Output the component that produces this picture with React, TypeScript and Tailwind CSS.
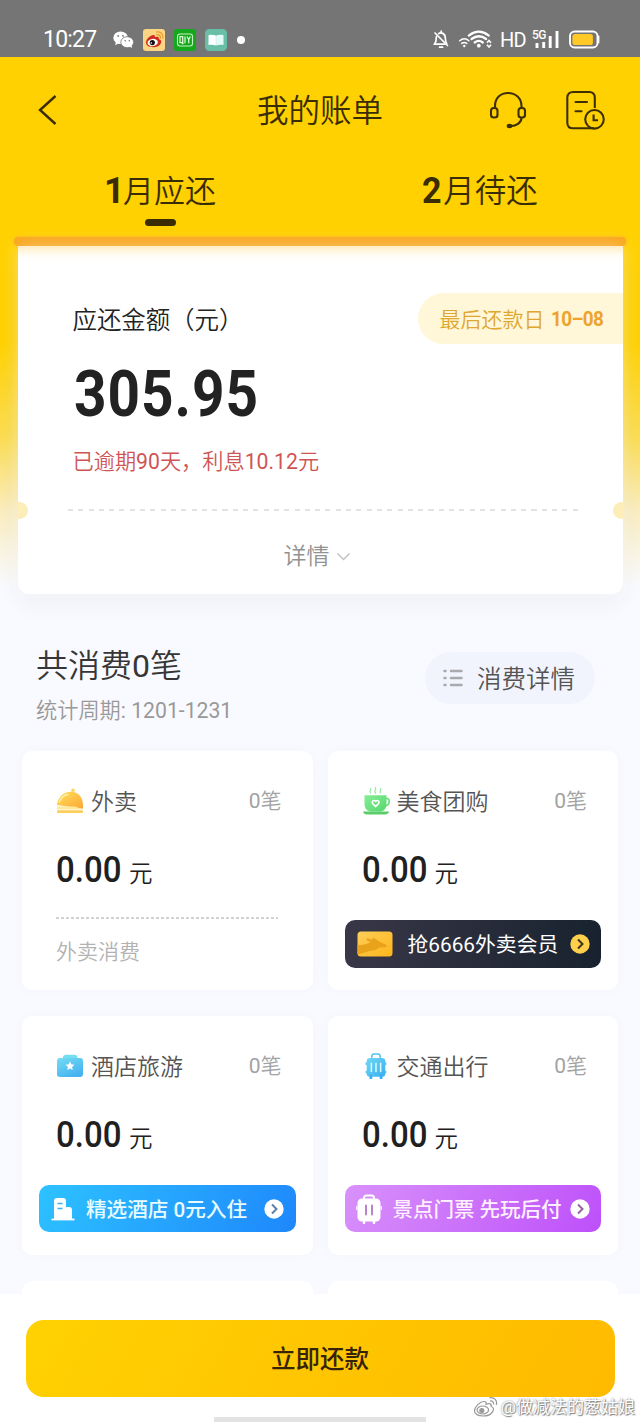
import React from "react";

type IconProps = { className?: string };

function WeChatIcon() {
  return (
    <svg className="h-[18px] w-[21px]" viewBox="0 0 21 18">
      <ellipse cx="7.6" cy="6.7" rx="7.3" ry="6.3" fill="#fff" />
      <path d="M3 11l-.9 3.2 3.4-1.7z" fill="#fff" />
      <ellipse cx="14.2" cy="11.2" rx="6.4" ry="5.5" fill="#fff" stroke="#757575" strokeWidth="0.8" />
      <path d="M16.5 15.5l2.6 1.6-.6-3z" fill="#fff" />
      <circle cx="5.2" cy="4.9" r="0.9" fill="#757575" />
      <circle cx="10" cy="4.9" r="0.9" fill="#757575" />
      <circle cx="12.2" cy="9.8" r="0.8" fill="#757575" />
      <circle cx="16.3" cy="9.8" r="0.8" fill="#757575" />
    </svg>
  );
}

function WeiboAppIcon() {
  return (
    <svg className="size-[22px]" viewBox="0 0 22 22">
      <rect width="22" height="22" rx="3" fill="#fbd583" />
      <path d="M3 13.5C3 10 7.5 6 10.5 6c1.5 0 1.7 1.2 1.3 2.2 2-.9 4.4-.8 4 1.7 2.2.8 3 2 2.2 4-1 2.7-4 4.3-7.7 4.3C6 18.2 3 16.5 3 13.5z" fill="#cf2d1c" />
      <ellipse cx="9.7" cy="13.5" rx="5.2" ry="3.6" fill="#fff" transform="rotate(-8 9.7 13.5)" />
      <circle cx="9.3" cy="13.6" r="2.6" fill="#16110f" />
      <circle cx="8.3" cy="14" r="0.8" fill="#fff" />
      <path d="M13.8 5.7c2.3-.4 4 1.3 3.6 3.5M13.8 3c4-.6 6.8 2.3 6.1 6.2" fill="none" stroke="#ea9b27" strokeWidth="1.3" strokeLinecap="round" />
    </svg>
  );
}

function VideoAppIcon() {
  return (
    <svg className="size-[22px]" viewBox="0 0 22 22">
      <rect width="22" height="22" rx="3" fill="#15a81c" />
      <rect x="3.5" y="5" width="15" height="12" rx="2.5" fill="none" stroke="#c9f2c4" strokeWidth="1.1" />
      <path d="M6 7.7h2.7v6H6zM8 13.5l1.4 1.7M11 7.5v6.7M13 7.5l1.7 3 1.7-3M14.7 10.5v3.7" fill="none" stroke="#e4fadf" strokeWidth="1.2" />
    </svg>
  );
}

function ReaderAppIcon() {
  return (
    <svg className="size-[22px]" viewBox="0 0 22 22">
      <rect width="22" height="22" rx="4.5" fill="#69bfa5" />
      <path d="M3.5 6.2c2.6-.6 5-.4 7.4.4v9.8c-2.4-.7-4.8-.8-7.4-.4z" fill="#fff" />
      <path d="M18.5 6.2c-2.6-.6-5-.4-7.4.4v9.8c2.4-.7 4.8-.8 7.4-.4z" fill="#e3fbf6" />
    </svg>
  );
}

function StatusIcons() {
  return (
    <svg className="h-[22px] w-[168px]" viewBox="0 0 168 22" fill="none" stroke="#fff">
      {/* muted bell */}
      <path d="M3.6 6C3.1 7.500 3.200 9.500 2.900 11.300L1.500 14.200h11M5.200 4C8 1.500 12.200 3.500 12.300 8c0 2.700.7 4.500 1.600 6" strokeWidth="1.7" />
      <path d="M8.2 1v2M2 3l12.5 12.5M6.600 17.200h3" strokeWidth="1.7" strokeLinecap="round" />
      {/* small wifi */}
      <path d="M26.7 10.800c2.800-2.600 6.300-2.600 9.200 0M28.700 13.400c1.700-1.300 3.400-1.300 5.100 0" strokeWidth="1.5" strokeLinecap="round" />
      <circle cx="31.3" cy="16" r="1.2" fill="#fff" stroke="none" />
      {/* large wifi */}
      <path d="M35.8 5.600c6.400-5 13.600-5 20 0M38.500 9c4.700-3.500 10-3.500 14.600 0M41.700 12.500c2.500-1.900 5.600-1.900 8.100 0" strokeWidth="2.2" strokeLinecap="round" />
      <circle cx="45.8" cy="15.7" r="1.9" fill="#fff" stroke="none" />
      <path d="M54 12.700l2-2.200 2 2.200M54 14.800l2 2.200 2-2.200" strokeWidth="1.6" />
      {/* signal bars */}
      <path d="M104 13v5M110.700 12v6M117.200 6v12M124 1v17" strokeWidth="2.9" />
      {/* battery */}
      <rect x="137" y="1.5" width="27.500" height="16" rx="4.5" strokeWidth="1.9" />
      <rect x="139.400" y="3.900" width="20.500" height="11.200" rx="2.6" fill="#ffc928" stroke="none" />
      <path d="M165.300 6.500v6" strokeWidth="2.200" strokeLinecap="round" />
    </svg>
  );
}

function HeadsetIcon() {
  return (
    <svg className="h-[38px] w-[38px]" viewBox="0 0 38 38" fill="none" stroke="#3c2f06" strokeWidth="2.1">
      <path d="M6 16.500V15C6 7.200 11.500 2 19 2S32.500 7.200 32.500 15v1.500" />
      <rect x="2" y="17" width="6.5" height="9.5" rx="2.8" />
      <rect x="29.5" y="17" width="6.5" height="9.5" rx="2.8" />
      <path d="M32.500 26.500c0 5-4.500 8.500-11.500 8.700" />
      <ellipse cx="20.5" cy="35" rx="2.8" ry="2.2" fill="#3c2f06" stroke="none" />
    </svg>
  );
}

function BillHistoryIcon() {
  return (
    <svg className="h-[40px] w-[40px]" viewBox="0 0 40 40" fill="none" stroke="#3c2f06" strokeWidth="2.1">
      <path d="M29.800 18V7.500c0-3.500-2-5.500-5.500-5.500H8C4.500 2 2.300 4 2.300 7.500v25C2.300 36 4.500 38.300 8 38.300h21" />
      <path d="M10.500 12H22M10.500 21.300h6" strokeLinecap="round" />
      <circle cx="29.5" cy="29.3" r="9.3" />
      <path d="M28.600 24.500v5.700H33" />
    </svg>
  );
}

function ClocheIcon({ className }: IconProps) {
  return (
    <svg className={className} viewBox="0 0 28 28">
      <defs>
        <linearGradient id="cloche" x1="0" y1="0" x2="1" y2="1">
          <stop offset="0" stopColor="#ffdf58" />
          <stop offset="1" stopColor="#fba838" />
        </linearGradient>
      </defs>
      <circle cx="17" cy="3.3" r="1.8" fill="#ffd45a" />
      <path d="M1 18C2 9 8.500 4 16 4.700c7.500.7 12 7 11 17L1 18z" fill="url(#cloche)" />
      <path d="M3.500 15C5 10.500 8.500 8 12 7.500" fill="none" stroke="#fff2ad" strokeWidth="1.3" strokeLinecap="round" />
      <path d="M1 19.500h18l8 3H1z" fill="#ffe89a" />
      <rect x="1" y="23.2" width="26" height="2.8" rx="1" fill="#fccd59" />
    </svg>
  );
}

function CupIcon({ className }: IconProps) {
  return (
    <svg className={className} viewBox="0 0 28 28">
      <defs>
        <linearGradient id="cup" x1="0" y1="0" x2="1" y2="1">
          <stop offset="0" stopColor="#86ed96" />
          <stop offset="1" stopColor="#55d86c" />
        </linearGradient>
      </defs>
      <path d="M8.500 6c-1.500-2 .8-2.500 0-4.500M13.500 6c-2-2.300 1-3 0-5.500M18.500 6c-1.500-2 .8-2.500 0-4.500" fill="none" stroke="#96e9a3" strokeWidth="1.2" strokeLinecap="round" />
      <path d="M23.500 11.500c5-.9 5.300 6.500-.8 7.500" fill="none" stroke="#6de180" strokeWidth="1.8" />
      <path d="M2.500 8.300h22V17c0 5-3 7.500-7 7.500H10c-4.500 0-7.500-2.500-7.500-7.500z" fill="url(#cup)" />
      <path d="M13.600 19.500l-2.900-2.900c-1.700-2 .9-4.200 2.900-2.200 2-2 4.600.2 2.900 2.200z" fill="none" stroke="#fff" strokeWidth="1.6" />
      <path d="M1 24.500h26c-.5 2.200-2 2.900-4 2.900H5c-2 0-3.500-.7-4-2.900z" fill="#58cd6a" />
    </svg>
  );
}

function CaseIcon({ className }: IconProps) {
  return (
    <svg className={className} viewBox="0 0 28 28">
      <defs>
        <linearGradient id="case" x1="0" y1="0" x2="0.6" y2="1">
          <stop offset="0" stopColor="#74dcf3" />
          <stop offset="1" stopColor="#46b3f1" />
        </linearGradient>
      </defs>
      <path d="M7 7V5.500C7 3.500 8.200 2.700 10 2.700h8.500c1.800 0 3 .8 3 2.800V7" fill="#74dcf3" />
      <rect x="1" y="6" width="26" height="19" rx="3" fill="url(#case)" />
      <path d="M14 9.500l1.300 2.800 3.100.4-2.300 2.200.6 3-2.700-1.500-2.700 1.500.6-3-2.300-2.200 3.100-.4z" fill="#fff" />
    </svg>
  );
}

function LuggageIcon({ className }: IconProps) {
  return (
    <svg className={className} viewBox="0 0 28 28">
      <defs>
        <linearGradient id="luggage" x1="0" y1="0" x2="1" y2="1">
          <stop offset="0" stopColor="#6cd8f4" />
          <stop offset="1" stopColor="#3baef0" />
        </linearGradient>
      </defs>
      <path d="M9.500 6V4c0-2 1-2.800 2.500-2.800h4c1.500 0 2.500.8 2.500 2.800v2" fill="none" stroke="#55c4e8" strokeWidth="1.6" />
      <rect x="4" y="5.5" width="20" height="20" rx="3.5" fill="url(#luggage)" />
      <path d="M9 11v9M14 11v9M19 11v9" stroke="#d6f8ff" strokeWidth="1.7" strokeLinecap="round" />
      <path d="M8.500 25v2M19.500 25v2" stroke="#3baef0" strokeWidth="3" strokeLinecap="round" />
      <path d="M3.500 10v3M3.500 19v3M24.500 10v3M24.500 19v3" stroke="#4abced" strokeWidth="1.2" />
    </svg>
  );
}

function VipCardIcon() {
  return (
    <svg className="h-[26px] w-[36px]" viewBox="0 0 36 26">
      <defs>
        <linearGradient id="vip" x1="0" y1="0" x2="1" y2="1">
          <stop offset="0" stopColor="#ffce59" />
          <stop offset="1" stopColor="#fdb51a" />
        </linearGradient>
        <clipPath id="vip-card">
          <rect x="0.5" y="0.5" width="35" height="25" rx="3.5" />
        </clipPath>
      </defs>
      <rect x="0.5" y="0.5" width="35" height="25" rx="3.5" fill="url(#vip)" />
      <g clipPath="url(#vip-card)">
        <path d="M0 14c4.500.3 8-.3 11.500-2L14 11l-4-1.500c-1.300-.9-.5-2.300 1-2l4.500 1.200c-1-1.400.5-2.200 2-1.400l6.500 4.200 4.500 2.100c2.200 1 1.800 2.500-.3 2.600l-6 .3c-1.200 1.800-5 3.300-9 3.500C8.700 20.500 6 23 0 23.500z" fill="#e9a31b" />
      </g>
    </svg>
  );
}

function HotelIcon() {
  return (
    <svg className="h-[24px] w-[24px]" viewBox="0 0 24 24">
      <path d="M3 22V4c0-2 1-3 3-3h6c2 0 3 1 3 3v6h3c2 0 3 1 3 3v9z" fill="#fff" />
      <path d="M.5 22.500h23" stroke="#fff" strokeWidth="1.8" />
      <path d="M6.500 6.500h5M6.500 11.500h5" stroke="#35b5fa" strokeWidth="1.6" />
    </svg>
  );
}

function TicketLuggageIcon() {
  return (
    <svg className="h-[30px] w-[26px]" viewBox="0 0 26 30">
      <path d="M8 6V4c0-1.500 1-2.500 2.500-2.500h5C17 1.500 18 2.500 18 4v2" fill="none" stroke="#fff" strokeWidth="2.2" />
      <rect x="1.5" y="4.5" width="23" height="23" rx="4.5" fill="#fff" />
      <path d="M10 11.500v9M16 11.500v9" stroke="#b783cc" strokeWidth="2" strokeLinecap="round" />
      <path d="M8 27v2M18 27v2" stroke="#fff" strokeWidth="2.5" strokeLinecap="round" />
      <path d="M.8 12v4M25.200 12v4" stroke="#fff" strokeWidth="1.2" />
    </svg>
  );
}

function ArrowBadge({ fill, stroke }: { fill: string; stroke: string }) {
  return (
    <svg className="size-5 shrink-0" viewBox="0 0 20 20">
      <circle cx="10" cy="10" r="9.7" fill={fill} />
      <path d="M8 5.500l4.500 4.500L8 14.500" fill="none" stroke={stroke} strokeWidth="2" />
    </svg>
  );
}

function Num({ children }: { children: React.ReactNode }) {
  return <span className="font-normal">{children}</span>;
}

type CardProps = {
  icon: React.ReactNode;
  title: string;
  children?: React.ReactNode;
};

function CategoryCard({ icon, title, children }: CardProps) {
  return (
    <section className="flex h-[239px] flex-col rounded-[10px] bg-white shadow-[0_0_14px_rgba(60,70,130,0.025)]">
      <div className="mt-[33px] flex h-[34px] items-center pl-[34px] pr-[31px]">
        {icon}
        <h3 className="ml-[7px] pt-[3px] text-[23px] leading-[34px] text-[#555]">{title}</h3>
        <span className="ml-auto text-[21px] leading-[34px] text-[#a2a2a2]">
          <Num>0</Num>笔
        </span>
      </div>
      <div className="mt-[28px] flex h-[46px] items-baseline pl-[34px] text-[#202020]">
        <span className="w-[66px] origin-left scale-x-[0.88] whitespace-nowrap font-[Roboto] text-[37.5px] font-medium leading-[46px]">0.00</span>
        <span className="ml-[7px] text-[23.5px] leading-[44px]">元</span>
      </div>
      <div className="h-px" />
      {children}
    </section>
  );
}

export default function App() {
  return (
    <div className="flex h-[1422px] w-[640px] flex-col overflow-hidden bg-[#f9faff] font-['Roboto','Noto_Sans_CJK_SC',sans-serif] font-[350]">
      <header className="flex h-[57px] shrink-0 items-start bg-[#757575] text-white">
        <span className="ml-[43px] mt-[25px] w-[55px] text-[23px] font-normal leading-[30px] tracking-[-0.8px]">10:27</span>
        <div className="ml-[15px] mt-[29px] flex h-[22px] items-center">
          <WeChatIcon />
          <span className="ml-[9px]"><WeiboAppIcon /></span>
          <span className="ml-[9px]"><VideoAppIcon /></span>
          <span className="ml-[9px]"><ReaderAppIcon /></span>
          <span className="ml-[10px] size-[8px] rounded-full bg-white" />
        </div>
        <div className="relative ml-auto mr-[39px] mt-[30px]">
          <StatusIcons />
          <span className="absolute left-[67px] top-[-1px] text-[20px] font-normal leading-[22px] tracking-[-0.8px]">HD</span>
          <span className="absolute left-[99px] top-0 text-[12px] font-medium leading-[11px] tracking-[-0.6px]">5G</span>
        </div>
      </header>

      <main className="flex h-[1237px] shrink-0 flex-col overflow-hidden bg-[linear-gradient(180deg,#ffd100_0px,#ffd100_285px,#fbdc50_380px,#faedc0_455px,#f9faff_530px)]">
        <nav className="flex h-[106px] shrink-0 items-center text-[#3a2d05]">
          <svg className="ml-[37px] h-[32px] w-[22px]" viewBox="0 0 22 32" fill="none" stroke="#3a2d05" strokeWidth="2.4">
            <path d="M18.500 2L3 16l15.500 14" />
          </svg>
          <h1 className="ml-[198px] pt-[3px] text-[31.5px] leading-[44px]">我的账单</h1>
          <div className="ml-[106px] flex items-center gap-[38px]">
            <HeadsetIcon />
            <BillHistoryIcon />
          </div>
        </nav>

        <div className="grid h-[74px] shrink-0 grid-cols-2 text-[#3a2d05]">
          <div className="flex flex-col items-center">
            <div className="mt-[5px] flex h-[46px] items-center text-[31px] leading-[46px]">
              <span className="w-[19px] text-[36px] font-bold tracking-[-2px]">1</span>
              <span className="pt-[2px]">月应还</span>
            </div>
            <span className="mt-[5px] h-[7px] w-[31px] rounded-full bg-[#3a2d05]" />
          </div>
          <div className="flex flex-col items-center">
            <div className="mt-[5px] flex h-[46px] items-center text-[31.5px] leading-[46px]">
              <span className="w-[21px] origin-left scale-x-[0.92] text-[37px] font-bold">2</span>
              <span className="pt-[2px]">月待还</span>
            </div>
          </div>
        </div>

        <div className="mx-[14px] h-[9px] shrink-0 rounded-full bg-[#f9a416] shadow-[0_0_3px_1px_#fdb91b]" />
        <section className="relative mx-[17.5px] flex h-[348px] shrink-0 flex-col rounded-b-[11px] bg-white bg-[linear-gradient(180deg,#ffedc6_0px,#fffdf7_10px,#fff_16px)] shadow-[0_0_18px_rgba(255,255,255,0.45),0_10px_22px_rgba(50,60,80,0.055)]">
          <div className="mt-[47px] flex h-[51px] items-center">
            <h2 className="ml-[55px] pt-[4px] text-[24.5px] leading-[47px] tracking-[-0.1px] text-[#222]">应还金额（元）</h2>
            <div className="ml-auto flex h-[51px] w-[205px] items-center rounded-l-full bg-[#fff7d7] pl-[22px] text-[21px] text-[#dfa72f]">
              <span className="pt-[4px]">最后还款日</span>
              <span className="ml-[6px] origin-left scale-x-[0.9] pt-[2px] font-bold tracking-[-0.7px] text-[#eda32c]">10–08</span>
            </div>
          </div>
          <div className="ml-[56px] mt-[14px] h-[72px] w-[210px] origin-left scale-x-[0.88] font-[Roboto] text-[64.5px] font-bold leading-[72px] tracking-[1.1px] text-[#222]">305.95</div>
          <p className="ml-[55px] mt-[16px] h-[30px] text-[21.2px] leading-[32px] text-[#cf5555]">
            已逾期<Num>90</Num>天，利息<Num>10.12</Num>元
          </p>
          <div className="ml-[50px] mr-[44px] mt-[33px] h-[2px] bg-[repeating-linear-gradient(90deg,#e3e3e3_0px,#e3e3e3_5px,transparent_5px,transparent_10.3px)]" />
          <div className="mt-[29px] flex h-[34px] items-center justify-center pr-[6px] text-[23px] text-[#929292]">
            详情
            <svg className="ml-[6px] h-[10px] w-[15px]" viewBox="0 0 15 10" fill="none" stroke="#c2c2c2" strokeWidth="1.5"><path d="M1.500 1.500l6 6 6-6" /></svg>
          </div>
          <span className="absolute left-0 top-[256px] h-[17px] w-[10px] rounded-r-full bg-[#fcedb9]" />
          <span className="absolute right-0 top-[256px] h-[17px] w-[10px] rounded-l-full bg-[#fcedb9]" />
        </section>

        <section className="mt-[50px] flex h-[84px] shrink-0 items-start pl-[36px] pr-[45px]">
          <div>
            <h2 className="text-[32px] leading-[44px] text-[#363636]">共消费<Num>0</Num>笔</h2>
            <p className="mt-[7px] text-[21.2px] leading-[32px] text-[#999]">统计周期<Num>: 1201-1231</Num></p>
          </div>
          <button className="ml-auto mt-[8px] flex h-[52px] w-[170px] items-center rounded-full bg-[#f1f4fc] pl-[18px] text-[24.5px] text-[#555]">
            <svg className="mr-[14px] h-[20px] w-[20px]" viewBox="0 0 20 20" stroke="#a9a9ae" strokeWidth="2.5" strokeLinecap="round">
              <path d="M1.500 3h1M1.500 10h1M1.500 17h1M8 3h10.500M8 10h10.500M8 17h10.500" />
            </svg>
            <span className="pt-[5px]">消费详情</span>
          </button>
        </section>

        <div className="ml-[22px] mt-[23px] grid w-[596px] shrink-0 grid-cols-2 gap-x-[15px] gap-y-[26px]">
          <CategoryCard title="外卖" icon={<ClocheIcon className="size-[28px]" />}>
            <div className="ml-[34px] mr-[35px] mt-[24px] h-[2px] bg-[repeating-linear-gradient(90deg,#d2d2d2_0px,#d2d2d2_3px,transparent_3px,transparent_5px)]" />
            <p className="ml-[34px] mt-[17px] text-[21px] leading-[32px] text-[#b2b2b2]">外卖消费</p>
          </CategoryCard>
          <CategoryCard title="美食团购" icon={<CupIcon className="size-[28px]" />}>
            <div className="mx-[17px] mt-[27px] flex h-[48px] items-center rounded-[10px] bg-[linear-gradient(90deg,#393747,#18222f)] pl-[12px] pr-[11px] text-[20.8px] font-normal text-white">
              <VipCardIcon />
              <span className="ml-[15px] mr-auto whitespace-nowrap pt-[3px]">抢6666外卖会员</span>
              <ArrowBadge fill="#ffd04c" stroke="#3e3420" />
            </div>
          </CategoryCard>
          <CategoryCard title="酒店旅游" icon={<CaseIcon className="size-[28px]" />}>
            <div className="mx-[17px] mt-[27px] flex h-[47px] items-center rounded-[10px] bg-[linear-gradient(120deg,#2dc2ff,#1e87fc)] pl-[12px] pr-[12px] text-[20.6px] font-medium text-[#e8fcff]">
              <HotelIcon />
              <span className="ml-[11px] mr-auto whitespace-nowrap pt-[3px]">精选酒店 0元入住</span>
              <ArrowBadge fill="#fff" stroke="#5b81a6" />
            </div>
          </CategoryCard>
          <CategoryCard title="交通出行" icon={<LuggageIcon className="mx-px size-[26px]" />}>
            <div className="mx-[17px] mt-[27px] flex h-[47px] items-center rounded-[10px] bg-[linear-gradient(120deg,#d891fa,#bd50fa)] pl-[11px] pr-[11px] text-[20.5px] font-medium text-[#fff0ff]">
              <TicketLuggageIcon />
              <span className="ml-[11px] mr-auto whitespace-nowrap pt-[3px]">景点门票 先玩后付</span>
              <ArrowBadge fill="#fff" stroke="#96649f" />
            </div>
          </CategoryCard>
          <section className="h-[40px] rounded-t-[10px] bg-white" />
          <section className="h-[40px] rounded-t-[10px] bg-white" />
        </div>
      </main>

      <footer className="relative flex h-[128px] shrink-0 flex-col items-center bg-white">
        <button className="mt-[26px] flex h-[77px] w-[589px] items-center justify-center rounded-[18px] bg-[linear-gradient(120deg,#ffd102,#ffba00)] pt-[3px] text-[24.5px] font-medium text-[#352408]">
          立即还款
        </button>
        <span className="mt-auto h-[5px] w-[212px] bg-[#e3e3e3]" />
        <div className="absolute bottom-[2px] right-[5px] flex items-center text-[17px] font-normal leading-[26px] text-white [text-shadow:0_0_2px_#777,1px_1px_1px_#888]">
          <svg className="mr-[3px] h-[22px] w-[25px]" viewBox="0 0 25 22" fill="none" stroke="#999" strokeWidth="1.2">
            <path d="M1.500 15C1.500 10.500 7 5.500 11 5.500c2 0 2.500 1.300 2 2.800 3-1.200 6-.8 5.200 2.200 2.300.8 2.800 2.500 1.800 4.600C18.500 18 14.500 20 10 20c-5 0-8.500-2-8.500-5z" fill="#fff" />
            <ellipse cx="9.8" cy="14" rx="5.8" ry="4" />
            <circle cx="8.8" cy="14.5" r="2" fill="#999" />
            <path d="M17 5c2.500-.4 4 1.200 3.600 3.500M16.500 1.800c4.800-.8 8 2.700 6.900 7" />
          </svg>
          @做减法的葱姑娘
        </div>
      </footer>
    </div>
  );
}
